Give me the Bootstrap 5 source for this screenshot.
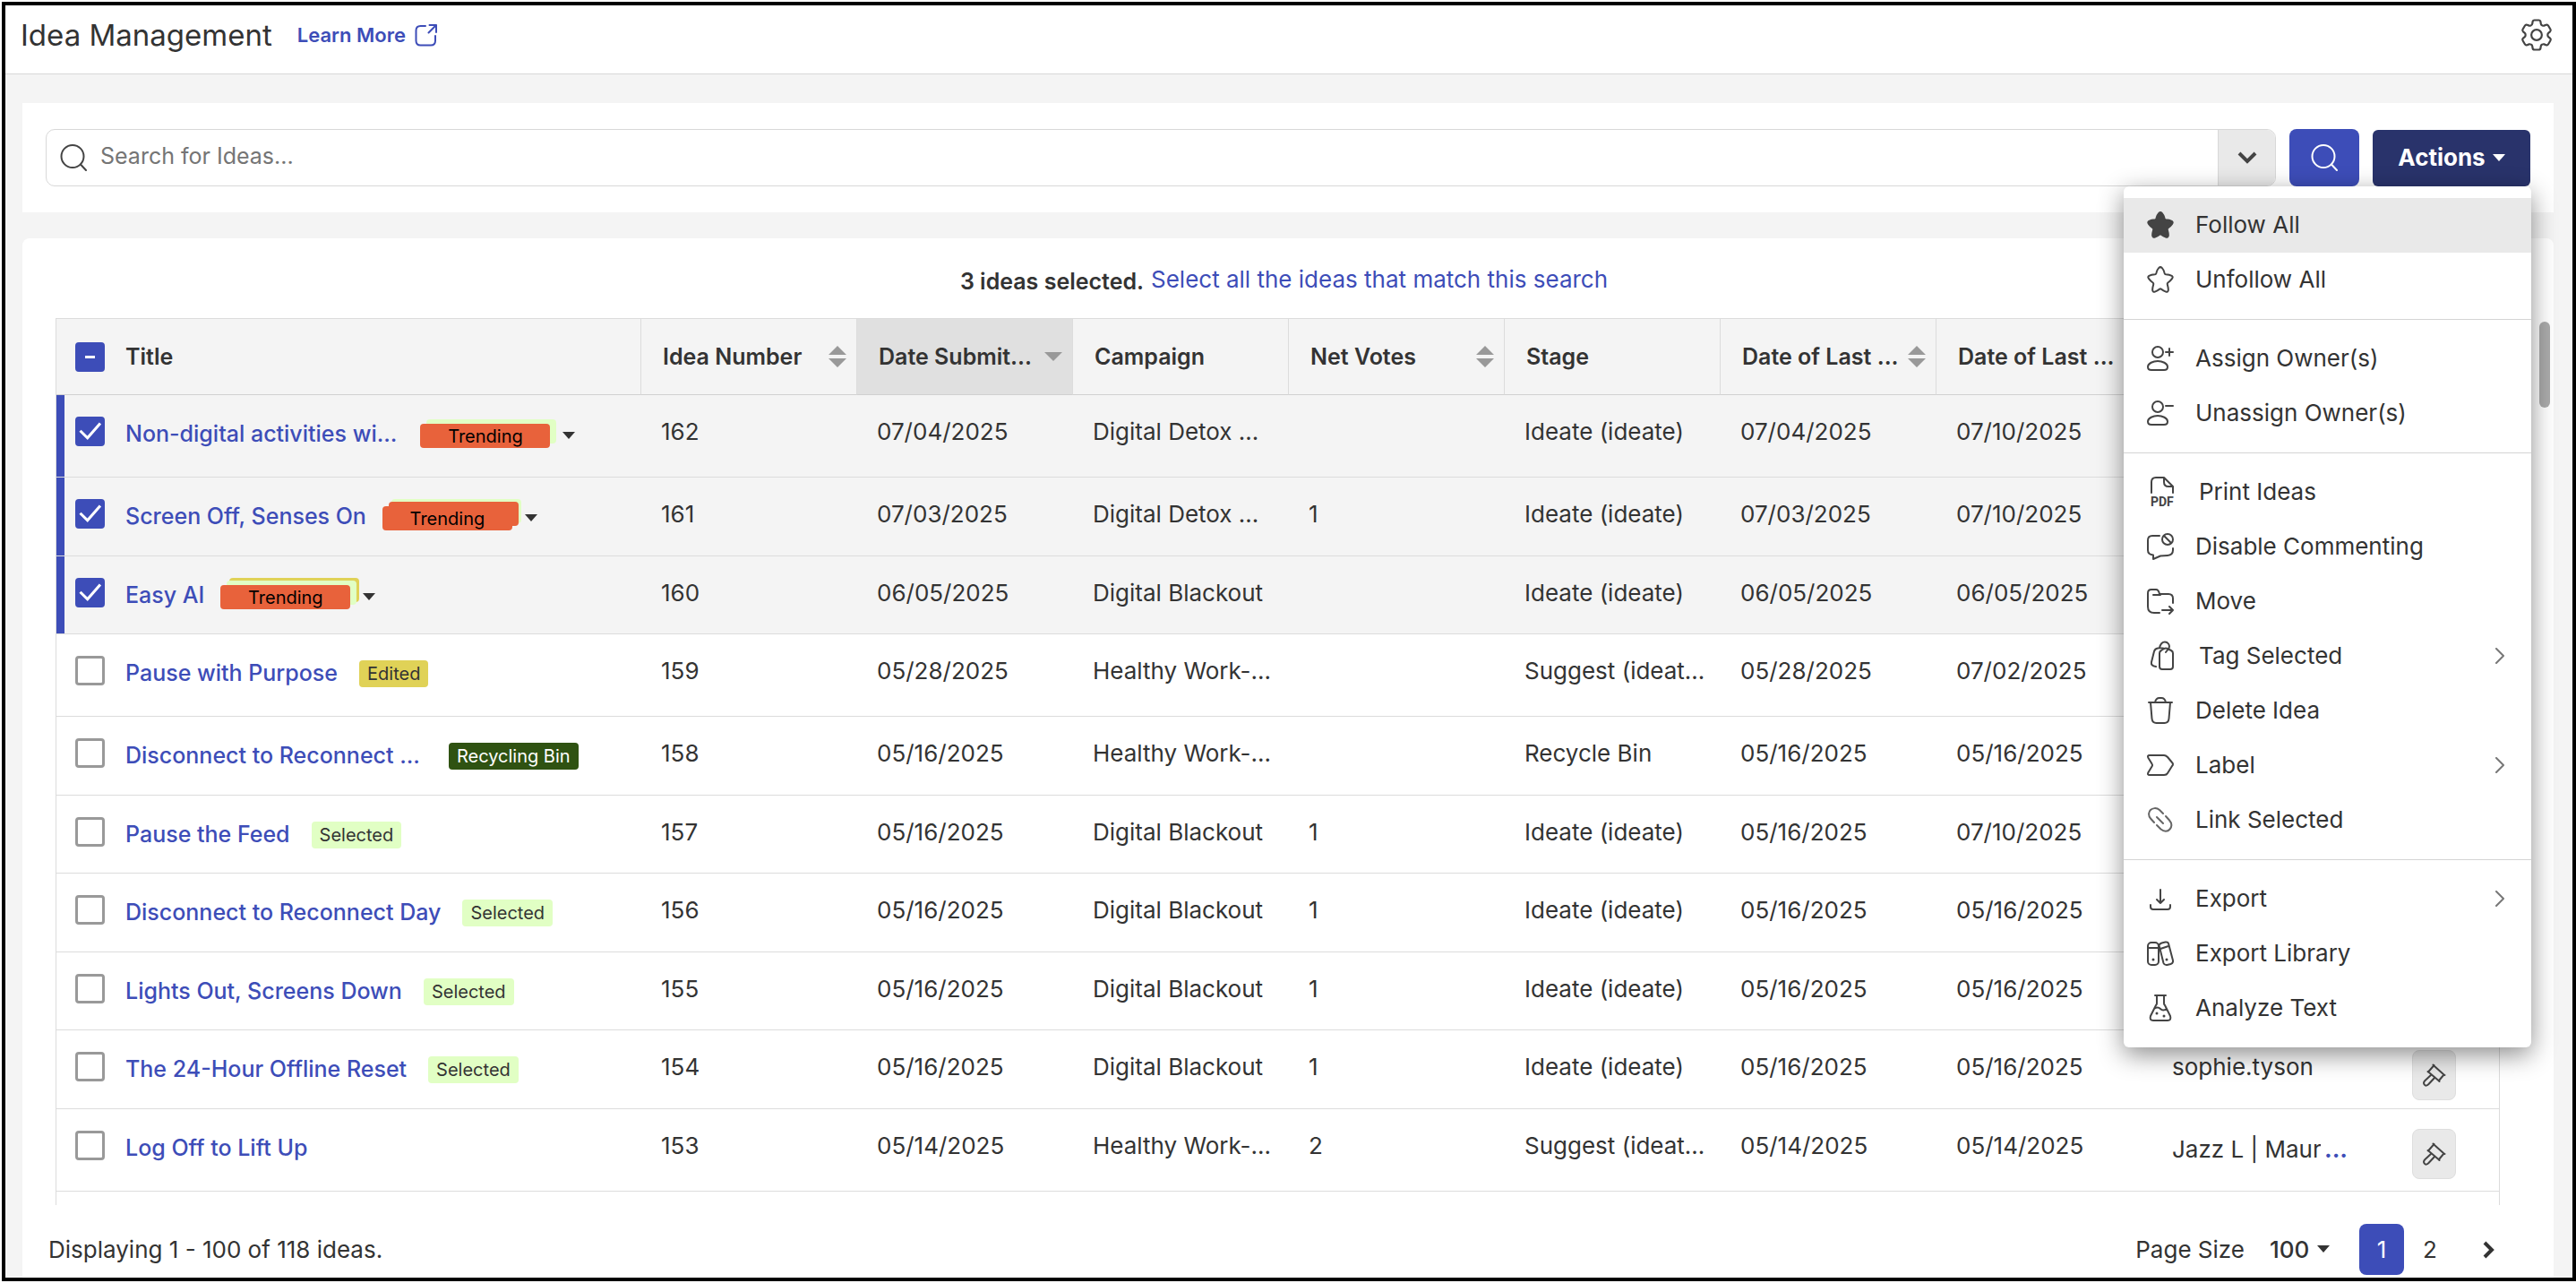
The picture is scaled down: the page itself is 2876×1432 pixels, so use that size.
<!DOCTYPE html>
<html lang="en">
<head>
<meta charset="utf-8">
<meta name="viewport" content="width=device-width, initial-scale=1">
<title>Idea Management</title>
<link href="https://cdn.jsdelivr.net/npm/bootstrap@5.3.0/dist/css/bootstrap.min.css" rel="stylesheet">
<style>
:root{--brand:#3d4db8;--navy:#29336b;--ink:#333;--line:#dcdcdc;--soft:#f4f4f4}
body{font-family:Inter,"Liberation Sans",sans-serif;font-size:26px;line-height:36px;color:var(--ink);background:#fff}
a{color:var(--brand);text-decoration:none}
svg{display:block;flex:none}
.ico{fill:none;stroke:#444;stroke-width:2;stroke-linecap:round;stroke-linejoin:round}
.shell{height:100vh;padding:2px 0 2px 2px}
.frame{border:4px solid #000}
.topbar{height:77px;border-bottom:1px solid #d8d8d8;padding:0 18px 10px 17px}
.page-title{font-size:33px;line-height:40px;font-weight:400}
.learn{font-size:22px;font-weight:600;gap:10px}
.icon-btn{border:0;background:none;padding:0}
.page-body{background:var(--soft);padding:32px 21px 0 19px;gap:29px;min-height:0}
.panel{background:#fff}
.toolbar{padding:29px 26px;gap:15px}
.searchbox{height:64px;border:1px solid #d8d8d8;border-radius:10px;overflow:hidden;padding-left:15px}
.searchbox input{font-size:25px;border:0;padding:0 0 4px 15px;box-shadow:none!important;color:var(--ink)}
.searchbox input::placeholder{color:#757575}
.btn-more{width:66px;height:62px;background:#e9e9e9;border:0;border-left:1px solid #d8d8d8}
.btn-find{width:78px;height:64px;background:var(--brand);border:0;border-radius:8px}
.btn-actions{width:176px;height:63px;background:var(--navy);border:0;border-radius:6px;color:#fff;font-weight:700;gap:8px}
.actions-menu{width:455px;top:100%;right:-1px;padding:13px 0;border:0;border-radius:6px;font-size:26px;box-shadow:0 8px 28px rgba(0,0,0,.45)}
.actions-menu .dropdown-item{height:61px;padding:0 29px 0 26px;gap:24px;color:var(--ink);display:flex;align-items:center}
.actions-menu .dropdown-item:hover,.actions-menu .dropdown-item.current{background:#e9e9e9}
.actions-menu .inset-item{padding-left:30px}
.actions-menu .dropdown-divider{margin:13px 0;border-color:#d4d4d4;opacity:1}
.results{border-radius:8px 8px 0 0;min-height:0}
.notice{height:89px;padding:6px 9px 0 0;gap:8px}
.notice strong{font-size:25px}
.grid-wrap{margin:0 60px 0 37px;min-height:0;border:1px solid var(--line);border-bottom:0;overflow:hidden}
.grid-table{table-layout:fixed;width:100%;border-collapse:separate;border-spacing:0}
.grid-table col.data-col{width:241px}
.grid-table col.tool-col{width:146px}
.grid-table th{height:85px;padding:0 11px 0 24px;background:var(--soft);border-right:1px solid var(--line);border-bottom:1px solid #d0d0d0;font-size:25px;font-weight:600;white-space:nowrap}
.grid-table th:last-child{border-right:0}
.grid-table th.sorted{background:#e0e0e0}
.grid-table td{height:88px;padding:23px 0 0 22px;vertical-align:top;white-space:nowrap;border-bottom:1px solid var(--line)}
.grid-table tr.roomy td{height:92px}
.grid-table tr.snug td{height:87px}
.grid-table tr.picked td{background:var(--soft)}
.grid-table tr.picked td:first-child{box-shadow:inset 9px 0 var(--brand)}
.grid-table .name-cell{padding:24px 0 0 21px}
.grid-table th.name-cell{padding-top:0}
.grid-table .tool-cell{padding:22px 0 0 49px}
.form-check-input.tick[type=checkbox]{width:33px;height:33px;margin:0;border:3px solid #999;border-radius:4px;flex:none}
.form-check-input.tick[type=checkbox]:checked{background-color:var(--brand);border-color:var(--brand);background-size:30px;background-image:url("data:image/svg+xml,%3Csvg xmlns='http://www.w3.org/2000/svg' viewBox='0 0 30 30'%3E%3Cpath fill='none' stroke='%23fff' stroke-width='3' d='M4 14l8 8L26 6'/%3E%3C/svg%3E")}
.form-check-input.tick[type=checkbox]:indeterminate{background-color:var(--brand);border-color:var(--brand);background-size:27px;background-image:url("data:image/svg+xml,%3Csvg xmlns='http://www.w3.org/2000/svg' viewBox='0 0 27 27'%3E%3Cpath fill='%23fff' d='M8 12h11v3H8z'/%3E%3C/svg%3E")}
.idea{gap:23px}
.idea-text{gap:24px;padding-top:1px}
.idea-text.stacked{gap:18px}
.idea-text a{font-size:25px;font-weight:500}
.pill{font-size:20px;line-height:30px;height:30px;border-radius:4px;padding:0 9px;margin-top:2px}
.pill-edited{background:#e0d257}
.pill-selected{background:#e1ffc4}
.pill-bin{background:#2f5212;color:#fff}
.stack{position:relative;isolation:isolate;width:145px;height:27px;margin-top:5px}
.stack b,.stack i{position:absolute;inset:0;border-radius:4px}
.stack b{background:#e8623b;color:#000;font-weight:400;font-size:20px;line-height:28px;text-align:center;z-index:3}
.stack i{z-index:2}
.stack .far{z-index:1;inset:-8px -10px 8px 10px}
.stack .near{inset:-5px -7px 5px 7px}
.bg-green{background:#e1ffc4}.bg-yellow{background:#e0d257}.bg-orange{background:#e8623b}
.stack-btn{margin:4px 0 0 -4px}
.wide-gap{margin-right:8px}
.btn-tool{width:49px;height:56px;border:1px solid #dedede;border-radius:8px;background:#e9e9e9}
.owners{width:166px;overflow:hidden}
.thumb{position:absolute;top:93px;right:4px;width:12px;height:96px;border-radius:6px;background:#ababab}
.pager{padding:21px 47px 3px 29px}
.size-select{appearance:none;border:0;background:url("data:image/svg+xml,%3Csvg xmlns='http://www.w3.org/2000/svg' viewBox='0 0 14 8'%3E%3Cpath fill='%23333' d='M0 0h14L7 8z'/%3E%3C/svg%3E") no-repeat right 13px/14px 8px;font-weight:500;color:var(--ink);width:67px;padding:0;margin:0 33px 0 28px}
.page-no{width:50px;height:57px;border-radius:8px;color:var(--ink)}
.page-no.on{background:var(--brand);color:#fff}
.pdf-tag{font-family:Roboto,sans-serif;font-size:14px;font-weight:700;fill:#444;stroke:none}
</style>
</head>
<body>
<svg width="0" height="0" class="position-absolute" aria-hidden="true">
  <symbol id="i-star" viewBox="0 0 30 30"><path d="M13.300 1.900q1.700-1.600 3.400 0q2 2 3 6.200q.4 1 1.400 1.200q4 .3 6.600 1.500q1.800 1.200.4 3q-2 2.800-4.700 4.700q-.9.800-.6 1.900q1.200 4.200 1 6.700q-.5 2.200-2.700 1.500q-2.600-1-5.300-3q-.8-.5-1.600 0q-2.700 2-5.300 3q-2.200.7-2.700-1.500q-.2-2.500 1-6.700q.3-1.100-.6-1.900q-2.700-1.900-4.700-4.700q-1.400-1.800.4-3q2.600-1.200 6.600-1.500q1-.2 1.400-1.200q1-4.200 3-6.200z"/></symbol>
  <symbol id="i-mag" viewBox="0 0 30 30"><circle cx="14" cy="13.500" r="12.500"/><path d="M23 22.500l6 6.500"/></symbol>
  <symbol id="i-sort" viewBox="0 0 20 24"><path d="M10 0l10 10H0zM0 14h20L10 24z"/></symbol>
  <symbol id="i-down" viewBox="0 0 14 8"><path d="M0 0h14L7 8z"/></symbol>
  <symbol id="i-next" viewBox="0 0 12 18"><path d="M2 1l8 8-8 8"/></symbol>
  <symbol id="i-gavel" viewBox="0 0 26 26"><path d="M12.500 2L6 9.500M5.500 9l2 1.500L17.500 19l1 1M11.500 1.500l2 2L23 12l1.500 1M23.500 12.500L18 19M9.500 12.500l-7 6.500q-2.500 2.500-.7 4.700t4.700-.7l7-7.500"/></symbol>
</svg>

<div class="shell">
<div class="frame h-100 d-flex flex-column">
  <header class="topbar d-flex align-items-center flex-shrink-0">
    <h1 class="page-title mb-0">Idea Management</h1>
    <a class="learn d-flex align-items-center ms-4 ps-1" href="#">Learn More
      <svg class="ico" style="stroke:var(--brand)" width="25" height="25" viewBox="0 0 25 25"><path d="M12 2H6.500Q1.500 2 1.500 7v11.500q0 5 5 5H18q5 0 5-5V13M15.500 9.500L24 1M16.500 1H24v8"/></svg>
    </a>
    <button class="icon-btn ms-auto" type="button" aria-label="Settings">
      <svg class="ico" width="44" height="44" viewBox="0 0 24 24" style="stroke-width:1.2"><circle cx="12" cy="12" r="3.200"/><path d="M9.594 3.940c.09-.542.56-.94 1.110-.94h2.593c.55 0 1.020.398 1.110.94l.213 1.281c.063.374.313.686.645.87.074.04.147.083.22.127.325.196.72.257 1.075.124l1.217-.456a1.125 1.125 0 0 1 1.370.49l1.296 2.247a1.125 1.125 0 0 1-.26 1.431l-1.003.827c-.293.241-.438.613-.43.992a7.723 7.723 0 0 1 0 .255c-.008.378.137.75.43.991l1.004.827c.424.35.534.955.26 1.430l-1.298 2.247a1.125 1.125 0 0 1-1.369.491l-1.217-.456c-.355-.133-.75-.072-1.076.124a6.470 6.470 0 0 1-.22.128c-.331.183-.581.495-.644.869l-.213 1.281c-.09.543-.56.94-1.110.94h-2.594c-.55 0-1.019-.398-1.110-.94l-.213-1.281c-.062-.374-.312-.686-.644-.87a6.520 6.520 0 0 1-.22-.127c-.325-.196-.72-.257-1.076-.124l-1.217.456a1.125 1.125 0 0 1-1.369-.49l-1.297-2.247a1.125 1.125 0 0 1 .26-1.431l1.004-.827c.292-.24.437-.613.43-.991a6.932 6.932 0 0 1 0-.255c.007-.38-.138-.751-.43-.992l-1.004-.827a1.125 1.125 0 0 1-.26-1.430l1.297-2.247a1.125 1.125 0 0 1 1.370-.491l1.216.456c.356.133.751.072 1.076-.124.072-.044.146-.086.22-.128.332-.183.582-.495.644-.869l.214-1.280Z"/></svg>
    </button>
  </header>

  <main class="page-body d-flex flex-column flex-grow-1">
    <section class="panel toolbar d-flex align-items-center flex-shrink-0">
      <div class="searchbox d-flex align-items-center flex-grow-1">
        <svg class="ico" width="30" height="30"><use href="#i-mag"/></svg>
        <input class="form-control h-100" type="text" placeholder="Search for Ideas..." aria-label="Search for Ideas">
        <button class="btn-more d-flex align-items-center justify-content-center" type="button" aria-label="Search options">
          <svg class="ico" width="22" height="14" viewBox="0 0 22 14" style="stroke-width:4;stroke-linecap:butt;stroke-linejoin:miter"><path d="M2 2l9 9 9-9"/></svg>
        </button>
      </div>
      <button class="btn-find d-flex align-items-center justify-content-center" type="button" aria-label="Search">
        <svg class="ico" style="stroke:#fff" width="30" height="30"><use href="#i-mag"/></svg>
      </button>
      <div class="dropdown">
        <button class="btn-actions d-flex align-items-center justify-content-center" type="button" aria-expanded="true">Actions
          <svg width="14" height="8" fill="#fff"><use href="#i-down"/></svg>
        </button>
        <ul class="dropdown-menu actions-menu show">
          <li><button class="dropdown-item current" type="button"><svg class="ico" style="fill:#444" width="30" height="30"><use href="#i-star"/></svg>Follow All</button></li>
          <li><button class="dropdown-item" type="button"><svg class="ico" width="30" height="30"><use href="#i-star"/></svg>Unfollow All</button></li>
          <li><hr class="dropdown-divider"></li>
          <li><button class="dropdown-item" type="button"><svg class="ico" width="30" height="30" viewBox="0 0 30 30"><circle cx="12" cy="8" r="6"/><path d="M21 8h8M25 4v8M5 28q-4 0-4-3.500C1 20.500 7 18 12 18s11 2.500 11 6.500q0 3.500-4 3.500z"/></svg>Assign Owner(s)</button></li>
          <li><button class="dropdown-item" type="button"><svg class="ico" width="30" height="30" viewBox="0 0 30 30"><circle cx="12" cy="8" r="6"/><path d="M21 7h8M5 28q-4 0-4-3.500C1 20.500 7 18 12 18s11 2.500 11 6.500q0 3.500-4 3.500z"/></svg>Unassign Owner(s)</button></li>
          <li><hr class="dropdown-divider"></li>
          <li><button class="dropdown-item inset-item" type="button"><svg class="ico" width="30" height="38" viewBox="0 0 30 38"><path d="M1 20V8q0-5 5-5h9l10 10v7M15 3v5q0 5 5 5h5"/><text class="pdf-tag" x="0" y="35">PDF</text></svg>Print Ideas</button></li>
          <li><button class="dropdown-item" type="button"><svg class="ico" width="30" height="30" viewBox="0 0 30 30"><circle cx="23" cy="7" r="6"/><path d="M19 3l8 8M14 3H6Q1 3 1 8v11q0 5 6 5.500V29l8-3.500 8-.5q6-.500 6-6v-2M7 29v-3"/></svg>Disable Commenting</button></li>
          <li><button class="dropdown-item" type="button"><svg class="ico" width="30" height="30" viewBox="0 0 30 30"><path d="M14 28H8q-7 0-7-7V6q0-4 4-4h5q3 0 4 5h10q5 0 5 5v5M7 8h8M17 25h12M25 21l4 4-4 4"/></svg>Move</button></li>
          <li><button class="dropdown-item inset-item" type="button"><svg class="ico" width="30" height="34" viewBox="0 0 30 34"><path d="M10 14q0-2 2-3l3-2q2-1 4 0l4 2q2 1 2 3v15q0 3-3 3H13q-3 0-3-3zM6 29q-6-1-5-5L4 12q1-3 4-3.500 3-.500 6 0M10 8c1-4 3-6.500 6-6.500s6 3 4.500 7L17 13"/></svg>Tag Selected<svg class="ico ms-auto" style="stroke:#777" width="12" height="18"><use href="#i-next"/></svg></button></li>
          <li><button class="dropdown-item" type="button"><svg class="ico" width="30" height="30" viewBox="0 0 30 30"><path d="M2 6h26M9 6q1-5 5-5h2q4 0 5 5M4 6l1.500 18q.5 5 5 5h9q4.500 0 5-5L26 6"/></svg>Delete Idea</button></li>
          <li><button class="dropdown-item" type="button"><svg class="ico" width="30" height="30" viewBox="0 0 30 30"><path d="M3 4h16q2 0 4 2l5 6q2 2 0 4l-5 8q-1 2-4 2H3q-3 0-1.500-3l4-6.500q1-1.500 0-3L1.500 7Q0 4 3 4z"/></svg>Label<svg class="ico ms-auto" style="stroke:#777" width="12" height="18"><use href="#i-next"/></svg></button></li>
          <li><button class="dropdown-item" type="button"><svg class="ico" style="stroke:#666" width="30" height="30" viewBox="0 0 30 30"><path d="M8 18l-4-4.500C1 10 2 6 4 4s6.500-3 10 0l4 4M21 11l4 4.500c3 3.500 3 7 .5 10s-6.500 3-10 0L11 21M11 12l7 7"/></svg>Link Selected</button></li>
          <li><hr class="dropdown-divider"></li>
          <li><button class="dropdown-item" type="button"><svg class="ico" width="30" height="30" viewBox="0 0 30 30"><path d="M15 5v15M11 16l4 4 4-4M4 22v2q0 3 3 3h16q3 0 3-3v-2"/></svg>Export<svg class="ico ms-auto" style="stroke:#777" width="12" height="18"><use href="#i-next"/></svg></button></li>
          <li><button class="dropdown-item" type="button"><svg class="ico" width="30" height="30" viewBox="0 0 30 30"><rect x="1" y="3" width="12" height="25" rx="4"/><path d="M1 9h12M14 8l-.5-1.500q0-2 3-3l4-1q3-.500 3.500 1.500l5 19q.500 3-2.500 4l-4 1q-3 .500-4-2zM15 10l9-3"/><path d="M7 22v.1M22 22v.1" stroke-width="3"/></svg>Export Library</button></li>
          <li><button class="dropdown-item" type="button"><svg class="ico" width="30" height="32" viewBox="0 0 30 32"><path d="M9 2h12M11 2v9q0 1-1 2L4 25q-1.500 5 3 5h16q4.500 0 3-5l-6-12q-1-1-1-2V2M8 17q4-3 7 0t7 0"/><path d="M11 22v.1M19 25v.1" stroke-width="3"/></svg>Analyze Text</button></li>
        </ul>
      </div>
    </section>

    <section class="panel results position-relative d-flex flex-column flex-grow-1">
      <div class="notice d-flex align-items-center justify-content-center flex-shrink-0">
        <strong class="fw-semibold">3 ideas selected.</strong>
        <a href="#" class="pb-1">Select all the ideas that match this search</a>
      </div>

      <div class="grid-wrap flex-grow-1">
        <table class="grid-table">
          <colgroup><col><col class="data-col"><col class="data-col"><col class="data-col"><col class="data-col"><col class="data-col"><col class="data-col"><col class="data-col"><col class="data-col"><col class="tool-col"></colgroup>
          <thead>
            <tr>
              <th class="name-cell"><div class="d-flex align-items-center idea"><input class="form-check-input tick" type="checkbox" id="all"><label for="all">Title</label></div></th>
              <th><div class="d-flex align-items-center justify-content-between">Idea Number<svg width="20" height="24" fill="#999"><use href="#i-sort"/></svg></div></th>
              <th class="sorted"><div class="d-flex align-items-center justify-content-between">Date Submit...<svg width="20" height="10" viewBox="0 0 20 10" fill="#999"><path d="M0 0h20L10 10z"/></svg></div></th>
              <th>Campaign</th>
              <th><div class="d-flex align-items-center justify-content-between">Net Votes<svg width="20" height="24" fill="#999"><use href="#i-sort"/></svg></div></th>
              <th>Stage</th>
              <th><div class="d-flex align-items-center justify-content-between">Date of Last ...<svg width="20" height="24" fill="#999"><use href="#i-sort"/></svg></div></th>
              <th>Date of Last ...</th>
              <th></th>
              <th></th>
            </tr>
          </thead>
          <tbody>
            <tr class="picked roomy"><td class="name-cell"><div class="d-flex align-items-start idea"><input class="form-check-input tick" type="checkbox" checked aria-label="Select idea 162"><div class="idea-text stacked d-flex align-items-center"><a href="#" class="wide-gap">Non-digital activities wi...</a><span class="stack"><i class="near bg-green"></i><b>Trending</b></span><button class="icon-btn stack-btn" type="button" aria-label="Show labels"><svg width="14" height="8" fill="#333"><use href="#i-down"/></svg></button></div></div></td><td>162</td><td>07/04/2025</td><td>Digital Detox ...</td><td></td><td>Ideate (ideate)</td><td>07/04/2025</td><td>07/10/2025</td><td></td><td></td></tr>
            <tr class="picked"><td class="name-cell"><div class="d-flex align-items-start idea"><input class="form-check-input tick" type="checkbox" checked aria-label="Select idea 161"><div class="idea-text stacked d-flex align-items-center"><a href="#">Screen Off, Senses On</a><span class="stack"><i class="far bg-green"></i><i class="near bg-orange"></i><b>Trending</b></span><button class="icon-btn stack-btn" type="button" aria-label="Show labels"><svg width="14" height="8" fill="#333"><use href="#i-down"/></svg></button></div></div></td><td>161</td><td>07/03/2025</td><td>Digital Detox ...</td><td>1</td><td>Ideate (ideate)</td><td>07/03/2025</td><td>07/10/2025</td><td></td><td></td></tr>
            <tr class="picked snug"><td class="name-cell"><div class="d-flex align-items-start idea"><input class="form-check-input tick" type="checkbox" checked aria-label="Select idea 160"><div class="idea-text stacked d-flex align-items-center"><a href="#">Easy AI</a><span class="stack"><i class="far bg-yellow"></i><i class="near bg-green"></i><b>Trending</b></span><button class="icon-btn stack-btn" type="button" aria-label="Show labels"><svg width="14" height="8" fill="#333"><use href="#i-down"/></svg></button></div></div></td><td>160</td><td>06/05/2025</td><td>Digital Blackout</td><td></td><td>Ideate (ideate)</td><td>06/05/2025</td><td>06/05/2025</td><td></td><td></td></tr>
            <tr class="roomy"><td class="name-cell"><div class="d-flex align-items-start idea"><input class="form-check-input tick" type="checkbox" aria-label="Select idea 159"><div class="idea-text d-flex align-items-center"><a href="#">Pause with Purpose</a><span class="pill pill-edited">Edited</span></div></div></td><td>159</td><td>05/28/2025</td><td>Healthy Work-...</td><td></td><td>Suggest (ideat...</td><td>05/28/2025</td><td>07/02/2025</td><td></td><td></td></tr>
            <tr><td class="name-cell"><div class="d-flex align-items-start idea"><input class="form-check-input tick" type="checkbox" aria-label="Select idea 158"><div class="idea-text d-flex align-items-center"><a href="#" class="wide-gap">Disconnect to Reconnect ...</a><span class="pill pill-bin">Recycling Bin</span></div></div></td><td>158</td><td>05/16/2025</td><td>Healthy Work-...</td><td></td><td>Recycle Bin</td><td>05/16/2025</td><td>05/16/2025</td><td></td><td></td></tr>
            <tr class="snug"><td class="name-cell"><div class="d-flex align-items-start idea"><input class="form-check-input tick" type="checkbox" aria-label="Select idea 157"><div class="idea-text d-flex align-items-center"><a href="#">Pause the Feed</a><span class="pill pill-selected">Selected</span></div></div></td><td>157</td><td>05/16/2025</td><td>Digital Blackout</td><td>1</td><td>Ideate (ideate)</td><td>05/16/2025</td><td>07/10/2025</td><td></td><td></td></tr>
            <tr><td class="name-cell"><div class="d-flex align-items-start idea"><input class="form-check-input tick" type="checkbox" aria-label="Select idea 156"><div class="idea-text d-flex align-items-center"><a href="#">Disconnect to Reconnect Day</a><span class="pill pill-selected">Selected</span></div></div></td><td>156</td><td>05/16/2025</td><td>Digital Blackout</td><td>1</td><td>Ideate (ideate)</td><td>05/16/2025</td><td>05/16/2025</td><td></td><td></td></tr>
            <tr class="snug"><td class="name-cell"><div class="d-flex align-items-start idea"><input class="form-check-input tick" type="checkbox" aria-label="Select idea 155"><div class="idea-text d-flex align-items-center"><a href="#">Lights Out, Screens Down</a><span class="pill pill-selected">Selected</span></div></div></td><td>155</td><td>05/16/2025</td><td>Digital Blackout</td><td>1</td><td>Ideate (ideate)</td><td>05/16/2025</td><td>05/16/2025</td><td></td><td></td></tr>
            <tr><td class="name-cell"><div class="d-flex align-items-start idea"><input class="form-check-input tick" type="checkbox" aria-label="Select idea 154"><div class="idea-text d-flex align-items-center"><a href="#">The 24-Hour Offline Reset</a><span class="pill pill-selected">Selected</span></div></div></td><td>154</td><td>05/16/2025</td><td>Digital Blackout</td><td>1</td><td>Ideate (ideate)</td><td>05/16/2025</td><td>05/16/2025</td><td>sophie.tyson</td><td class="tool-cell"><button class="btn-tool d-flex align-items-center justify-content-center" type="button" aria-label="Idea tools"><svg class="ico" width="26" height="26"><use href="#i-gavel"/></svg></button></td></tr>
            <tr class="roomy"><td class="name-cell"><div class="d-flex align-items-start idea"><input class="form-check-input tick" type="checkbox" aria-label="Select idea 153"><div class="idea-text d-flex align-items-center"><a href="#">Log Off to Lift Up</a></div></div></td><td>153</td><td>05/14/2025</td><td>Healthy Work-...</td><td>2</td><td>Suggest (ideat...</td><td>05/14/2025</td><td>05/14/2025</td><td><div class="d-flex pt-1"><span class="owners">Jazz L | Maure</span><a href="#" class="fw-bold ps-1">...</a></div></td><td class="tool-cell"><button class="btn-tool d-flex align-items-center justify-content-center" type="button" aria-label="Idea tools"><svg class="ico" width="26" height="26"><use href="#i-gavel"/></svg></button></td></tr>
          </tbody>
        </table>
      </div>
      <div class="thumb"></div>

      <footer class="pager d-flex align-items-center flex-shrink-0">
        <span>Displaying 1 - 100 of 118 ideas.</span>
        <label class="ms-auto" for="size">Page Size</label>
        <select class="size-select" id="size"><option>100</option></select>
        <nav class="d-flex align-items-center" aria-label="Pages">
          <a href="#" class="page-no on d-flex align-items-center justify-content-center">1</a>
          <a href="#" class="page-no d-flex align-items-center justify-content-center ms-1">2</a>
          <a href="#" class="page-no d-flex align-items-center justify-content-center ms-3" aria-label="Next page"><svg class="ico" width="14" height="20" viewBox="0 0 14 20" style="stroke:#333;stroke-width:4;stroke-linecap:butt;stroke-linejoin:miter"><path d="M2 2l8 8-8 8"/></svg></a>
        </nav>
      </footer>
    </section>
  </main>
</div>
</div>
<script src="https://cdn.jsdelivr.net/npm/bootstrap@5.3.0/dist/js/bootstrap.bundle.min.js"></script>
<script>
// Some rows are ticked, so the header tick box shows its mixed state
document.getElementById('all').indeterminate = true;
</script>
</body>
</html>
